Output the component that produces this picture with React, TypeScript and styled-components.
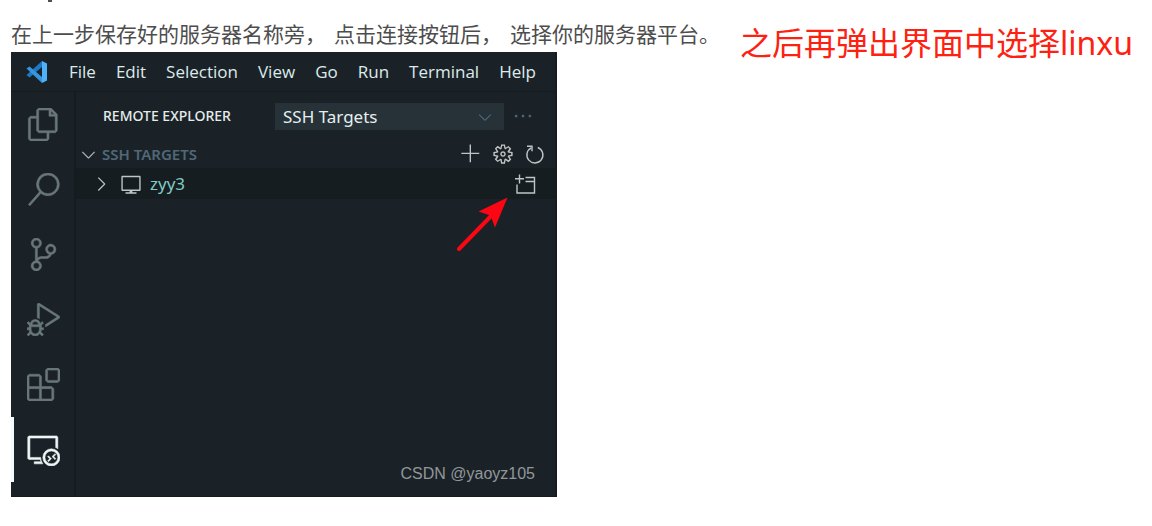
import React from "react";
import styled, { createGlobalStyle, css } from "styled-components";
import {
  VscFiles, VscSearch, VscSourceControl, VscDebugAlt, VscExtensions,
  VscRemoteExplorer, VscAdd, VscGear, VscVm,
  VscChevronDown, VscChevronRight, VscEllipsis,
} from "react-icons/vsc";

const uiFont = `"Noto Sans", "Open Sans", "Noto Sans CJK SC", sans-serif`;

const GlobalStyle = createGlobalStyle`
  *, *::before, *::after { box-sizing: border-box; }
  body { margin: 0; background: #fff; font-family: ${uiFont}; }
  button { border: 0; padding: 0; background: none; color: inherit; font: inherit; cursor: pointer; }
`;

const Page = styled.main`
  display: flex;
  align-items: flex-start;
  gap: 20px;
  padding: 0 11px;
`;

const Article = styled.article`
  flex: 0 1 709px;
  min-width: 0;
`;

const HeadingRemnant = styled.div`
  height: 20px;
  padding-left: 37px;

  &::before {
    content: "";
    display: block;
    width: 4px;
    height: 2px;
    background: #4f4f4f;
  }
`;

const Step = styled.p`
  display: flex;
  flex-wrap: wrap;
  column-gap: 8px;
  margin: 0;
  padding-bottom: 6px;
  font: 21px/26px "Noto Sans CJK SC", sans-serif;
  color: #4d4d4d;
`;

const Note = styled.p`
  margin: 23px 0 0;
  font: 32px/40px "Noto Sans", "Noto Sans CJK SC", sans-serif;
  white-space: nowrap;
  color: #fe2010;
`;

const Editor = styled.section`
  position: relative;
  max-width: 546px;
  background: #1b2227;
  border-right: 2px solid #151c1f;
  border-bottom: 1px solid #151c1f;
`;

const MenuBar = styled.nav`
  display: flex;
  align-items: center;
  gap: 20px;
  height: 40px;
  padding-left: 14px;
  border-bottom: 1px solid #151b1f;
  font-family: "Open Sans", ${uiFont};
  font-size: 17px;
  line-height: 24px;
  color: #dcebeb;
`;

const Menu = styled.button`
  font-weight: 500;
`;

const Body = styled.div`
  display: flex;
`;

const ActivityBar = styled.div`
  display: flex;
  flex-direction: column;
  width: 65px;
  padding-bottom: 14px;
  border-right: 2px solid #151b1f;
`;

const Activity = styled.button<{ $active?: boolean }>`
  display: flex;
  align-items: center;
  justify-content: center;
  height: 65px;
  padding-right: 2px;
  border-left: 3px solid transparent;
  color: #69777b;
  font-size: 33px;

  svg { stroke-width: 0.4; }

  ${({ $active }) => $active && css`
    border-left-color: #f2fbfb;
    color: #eef6f6;
  `}
`;

const SideBar = styled.div`
  flex: 1;
  min-width: 0;
`;

const SideHeader = styled.header`
  display: flex;
  align-items: center;
  height: 48px;
  padding: 0 21px 0 27px;
`;

const SideTitle = styled.h2`
  flex: 1;
  margin: 0;
  font-size: 14px;
  line-height: 24px;
  font-weight: 500;
  color: #e4eded;
`;

const SelectBox = styled.label`
  position: relative;
  width: 229px;
  margin-right: 8px;

  svg {
    position: absolute;
    top: 4px;
    right: 9px;
    font-size: 20px;
    color: #4c6677;
    pointer-events: none;
  }
`;

const Select = styled.select`
  display: block;
  width: 100%;
  height: 27px;
  padding: 0 8px;
  border: 0;
  border-radius: 0;
  appearance: none;
  background: #263238;
  color: #e6eeee;
  font: 17px/27px ${uiFont};
`;

const IconButton = styled.button<{ $muted?: boolean }>`
  display: flex;
  font-size: 22px;
  color: ${({ $muted }) => ($muted ? "#4c6677" : "#c0c4c5")};
`;

const SectionRow = styled.div`
  display: flex;
  align-items: center;
  height: 28px;
  padding: 0 9px 0 2px;
`;

const SectionToggle = styled.button`
  display: flex;
  flex: 1;
  align-items: center;
  gap: 3px;
  font-size: 15px;
  line-height: 24px;
  font-weight: 600;
  color: #4f6878;

  svg { font-size: 21px; color: #b4babc; }
`;

const Actions = styled.div`
  display: flex;
  gap: 10px;
`;

const HostRow = styled.div`
  display: flex;
  align-items: center;
  height: 31px;
  padding: 0 19px 0 14px;
  background: #161d20;
`;

const Host = styled.button`
  display: flex;
  flex: 1;
  align-items: center;
  gap: 8px;
  font-size: 17px;
  line-height: 24px;
  color: #80cbc4;

  svg { font-size: 22px; color: #c0c4c5; }
`;

const Arrow = styled.svg`
  position: absolute;
  top: 143px;
  left: 445px;
  pointer-events: none;
`;

const Watermark = styled.span`
  position: absolute;
  right: 20px;
  bottom: 11px;
  font: 16px/22px "Liberation Sans", sans-serif;
  color: #92979a;
`;

const Logo = () => (
  <svg width="24" height="24" viewBox="0 0 24 24" aria-label="Visual Studio Code">
    <path d="M17 1 22 3.500v17L17 23z" fill="#4db2f8" />
    <path d="M17 1v6L4.500 17.500 1.500 15z" fill="#1d78c8" />
    <path d="M1.500 8.500 4.500 6.500 17 17v6z" fill="#3794dd" />
  </svg>
);

const RefreshIcon = () => (
  <svg width="22" height="22" viewBox="0 0 22 22" fill="none" stroke="currentColor" strokeWidth="1.4">
    <path d="M7.300 4.800a8 8 0 1 0 6.500-.3" />
    <path d="M3 3.300h5v5" />
  </svg>
);

const NewWindowIcon = () => (
  <svg width="22" height="22" viewBox="0 0 22 22" fill="none" stroke="currentColor" strokeWidth="1.4">
    <path d="M5.500 1.500v9M1 5.800h9" />
    <path d="M11.500 4.500h9v15.500H3v-8.500M11.500 8.500h9" />
  </svg>
);

const menus = ["File", "Edit", "Selection", "View", "Go", "Run", "Terminal", "Help"];

const activities = [
  { label: "Explorer", Icon: VscFiles },
  { label: "Search", Icon: VscSearch },
  { label: "Source Control", Icon: VscSourceControl },
  { label: "Run and Debug", Icon: VscDebugAlt },
  { label: "Extensions", Icon: VscExtensions },
  { label: "Remote Explorer", Icon: VscRemoteExplorer, active: true },
];

export default function App() {
  return (
    <>
      <GlobalStyle />
      <Page>
        <Article>
          <HeadingRemnant />
          <Step lang="zh-CN">
            <span>在上一步保存好的服务器名称旁，</span>
            <span>点击连接按钮后，</span>
            <span>选择你的服务器平台。</span>
          </Step>
          <Editor>
            <MenuBar>
              <Logo />
              {menus.map((m) => <Menu key={m}>{m}</Menu>)}
            </MenuBar>
            <Body>
              <ActivityBar>
                {activities.map(({ label, Icon, active }) => (
                  <Activity key={label} aria-label={label} $active={active}><Icon /></Activity>
                ))}
              </ActivityBar>
              <SideBar>
                <SideHeader>
                  <SideTitle>REMOTE EXPLORER</SideTitle>
                  <SelectBox>
                    <Select aria-label="Remote type"><option>SSH Targets</option></Select>
                    <VscChevronDown />
                  </SelectBox>
                  <IconButton aria-label="More actions" $muted><VscEllipsis /></IconButton>
                </SideHeader>
                <SectionRow>
                  <SectionToggle><VscChevronDown />SSH TARGETS</SectionToggle>
                  <Actions>
                    <IconButton aria-label="Add"><VscAdd /></IconButton>
                    <IconButton aria-label="Configure"><VscGear /></IconButton>
                    <IconButton aria-label="Refresh"><RefreshIcon /></IconButton>
                  </Actions>
                </SectionRow>
                <HostRow>
                  <Host><VscChevronRight /><VscVm />zyy3</Host>
                  <IconButton aria-label="Connect in new window"><NewWindowIcon /></IconButton>
                </HostRow>
              </SideBar>
            </Body>
            <Arrow width="56" height="58" viewBox="0 0 56 58" aria-hidden="true">
              <path d="M3 54 36 20" stroke="#fb0612" strokeWidth="4" strokeLinecap="round" />
              <path d="M51.500 2.500 22.500 16.500 34.500 20.500 39 32.500z" fill="#fb0612" />
            </Arrow>
            <Watermark>CSDN @yaoyz105</Watermark>
          </Editor>
        </Article>
        <Note lang="zh-CN">之后再弹出界面中选择linxu</Note>
      </Page>
    </>
  );
}
